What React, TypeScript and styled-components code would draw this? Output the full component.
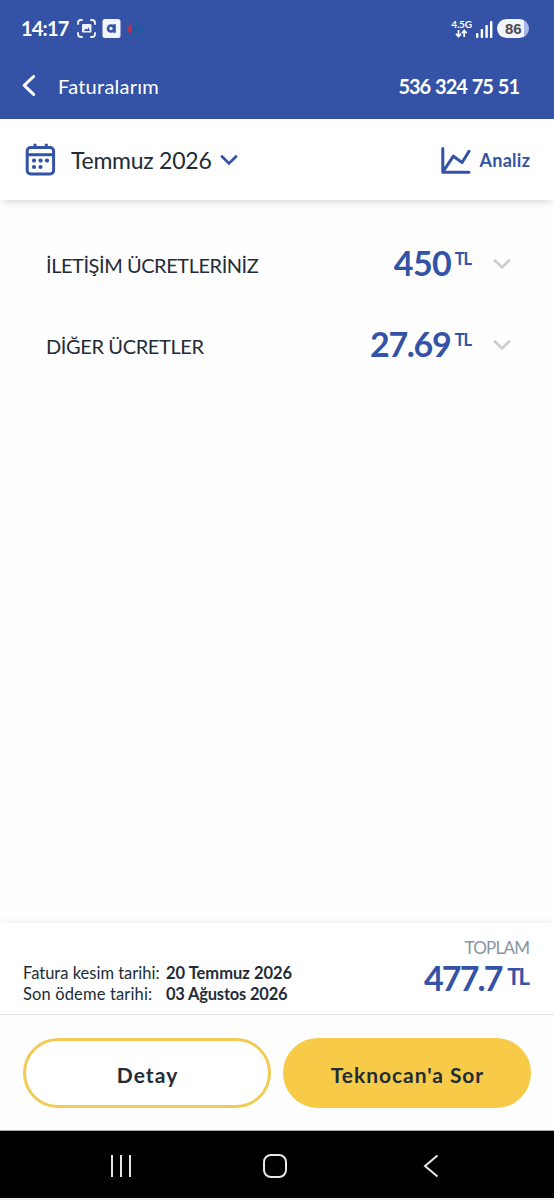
import React from 'react';
import styled, { createGlobalStyle } from 'styled-components';

const blue = '#3453a6';
const ink = '#222c38';

const GlobalStyle = createGlobalStyle`
  * { box-sizing: border-box; }
  body { margin: 0; background: #fff; font-family: Lato, "Liberation Sans", sans-serif; }
  svg { display: block; flex: none; }
`;

const Screen = styled.div`
  width: 554px;
  height: 1200px;
  display: flex;
  flex-direction: column;
  background: #fefefe;
  overflow: hidden;
`;

const Text = styled.span<{ $size: number; $weight?: number; $track?: number; $word?: number; $color?: string }>`
  font-size: ${p => p.$size}px;
  font-weight: ${p => p.$weight ?? 400};
  letter-spacing: ${p => p.$track ?? 0}px;
  word-spacing: ${p => p.$word ?? 0}px;
  margin-left: 0;
  margin-right: ${p => -(p.$track ?? 0)}px;
  color: ${p => p.$color ?? ink};
  line-height: 1.2;
  white-space: pre;
`;

const Header = styled.header`
  height: 119px;
  flex: none;
  background: ${blue};
`;

const StatusBar = styled.div`
  height: 57px;
  padding: 0 25px 0 21px;
  display: flex;
  align-items: center;
  justify-content: space-between;
`;

const StatusGroup = styled.div<{ $gap: number }>`
  display: flex;
  align-items: center;
  gap: ${p => p.$gap}px;
`;

const ClockBox = styled.div`
  width: 50px;
  margin-top: -1px;
`;

const Network = styled.div`
  width: 21px;
  display: flex;
  flex-direction: column;
  align-items: center;
`;

const NetworkLabel = styled.span`
  font: 700 10px/9px Lato, sans-serif;
  color: #fff;
  letter-spacing: -0.2px;
`;

const Battery = styled.div`
  width: 32px;
  height: 19px;
  border-radius: 10px;
  background: linear-gradient(90deg, #f4f4fb 27px, #a9b6e4 27px);
  display: flex;
  align-items: center;
  padding-left: 8px;
  font: 700 15px/19px "Liberation Sans", sans-serif;
  color: #4a4a50;
`;

const NavRow = styled.div`
  height: 57px;
  padding: 0 34px 0 22px;
  display: flex;
  align-items: center;
`;

const NavTitle = styled.div`
  flex: 1;
  padding-left: 20px;
`;

const PeriodBar = styled.div`
  height: 81px;
  flex: none;
  padding: 0 24px 0 25px;
  display: flex;
  align-items: center;
  background: #fff;
  box-shadow: 0 4px 7px -2px rgba(0, 0, 0, 0.15);
`;

const Period = styled.button`
  border: 0;
  background: none;
  padding: 0;
  display: flex;
  align-items: center;
  font-family: inherit;
`;

const PeriodLabel = styled.span`
  width: 149px;
  margin-left: 15px;
  padding-top: 2px;
  text-align: left;
`;

const Analysis = styled.div`
  margin-left: auto;
  padding-top: 2px;
  display: flex;
  align-items: center;
  gap: 8px;
`;

const Charges = styled.main`
  flex: 1;
  padding: 23px 43px 0 46px;
`;

const ChargeRow = styled.div`
  height: 81px;
  display: flex;
  align-items: center;
`;

const ChargeName = styled.div`
  flex: 1;
  padding-top: 3px;
`;

const Amount = styled.div<{ $gap: number }>`
  display: flex;
  align-items: flex-start;
  justify-content: flex-end;
  gap: ${p => p.$gap}px;
`;

const Unit = styled.div<{ $top: number }>`
  padding-top: ${p => p.$top}px;
  display: flex;
`;

const ChevronSlot = styled.div`
  margin-left: 21px;
`;

const Summary = styled.section`
  height: 92px;
  flex: none;
  padding: 0 24px 0 23px;
  display: flex;
  justify-content: space-between;
  background: #fff;
  border-bottom: 1px solid #dce2ea;
  box-shadow: 0 -4px 7px -2px rgba(0, 0, 0, 0.06);
`;

const Dates = styled.dl`
  margin: 0;
  padding-top: 41px;
  display: grid;
  grid-template-columns: 143px auto;
  grid-auto-rows: 20.5px;
  align-content: start;
`;

const Total = styled.div`
  padding-top: 15px;
  display: flex;
  flex-direction: column;
  align-items: flex-end;
`;

const Actions = styled.div`
  height: 115px;
  flex: none;
  padding: 23px 23px 0;
  display: grid;
  grid-template-columns: 248px 248px;
  column-gap: 12px;
`;

const PillButton = styled.button<{ $filled?: boolean }>`
  height: 70px;
  padding: 3px 0 0;
  border-radius: 35px;
  border: 3px solid ${p => (p.$filled ? '#f7cb47' : '#f1cb55')};
  background: ${p => (p.$filled ? '#f7cb47' : '#fff')};
  font-family: inherit;
`;

const SystemNav = styled.nav`
  height: 70px;
  flex: none;
  background: #000;
  border-top: 1px solid #aaa;
  border-bottom: 2px solid #ededed;
  display: grid;
  grid-template-columns: 197px 112px 200px;
  padding: 3px 0 0 22px;
  align-items: center;
  justify-items: center;
`;

const Chevron = ({ color }: { color: string }) => (
  <svg width="18" height="12" viewBox="0 0 18 12" fill="none" stroke={color} strokeWidth="2.8">
    <path d="M1.2 1.8 L9 9.4 L16.8 1.8" />
  </svg>
);

const charges = [
  { name: 'İLETİŞİM ÜCRETLERİNİZ', amount: '450', track: -0.6, nameTrack: -0.45 },
  { name: 'DİĞER ÜCRETLER', amount: '27.69', track: -1.3, nameTrack: -0.38 },
];

export default function App() {
  return (
    <Screen>
      <GlobalStyle />
      <Header>
        <StatusBar>
          <StatusGroup $gap={6}>
            <ClockBox><Text $size={20} $weight={700} $track={-0.8} $color="#fff">14:17</Text></ClockBox>
            <svg width="19" height="19" viewBox="0 0 19 19" fill="none" stroke="#eef1fa" strokeWidth="1.9" strokeLinecap="round">
              <path d="M1 5V4Q1 1 4 1H5M14 1h1q3 0 3 3v1M18 14v1q0 3-3 3h-1M5 18H4q-3 0-3-3v-1" />
              <rect x="5" y="5" width="9.4" height="8.6" rx="1.2" fill="#eef1fa" stroke="none" />
              <path d="M6.8 12l2-2.4 1.4 1.2 1.3-2.6 1.4 3.8z" fill={blue} stroke="none" />
            </svg>
            <svg width="19" height="19" viewBox="0 0 19 19">
              <rect x=".5" y="0" width="18" height="19" rx="2.5" fill="#f3f5fc" />
              <circle cx="9" cy="9.5" r="3" fill="none" stroke={blue} strokeWidth="2.6" />
              <path d="M12.5 5.2v8.6" stroke={blue} strokeWidth="2.6" />
            </svg>
            <svg width="20" height="16" viewBox="2 0 20 16">
              <path d="M1.500 8 L6 3 V13 Z" fill="#b8324f" />
              <path d="M8 5l3-3h3l-1 4h2V3.500l4.500 4.500-4.500 4.500V10h-2l1 4h-3l-3-3z" fill="#24599f" />
            </svg>
          </StatusGroup>
          <StatusGroup $gap={4}>
            <Network>
              <NetworkLabel>4.5G</NetworkLabel>
              <svg width="13" height="9" viewBox="0 0 13 9" fill="none" stroke="#fff" strokeWidth="1.7">
                <path d="M3.5 1v6M1 4.8l2.5 2.7L6 4.8M9.2 8V2M6.8 4.2l2.4-2.7 2.5 2.7" />
              </svg>
            </Network>
            <svg width="17" height="18" viewBox="0 0 17 18" fill="#fff">
              <rect x="0" y="13" width="2.4" height="5" rx=".8" />
              <rect x="4.7" y="9" width="2.4" height="9" rx=".8" />
              <rect x="9.4" y="5" width="2.4" height="13" rx=".8" />
              <rect x="14" y="1" width="2.4" height="17" rx=".8" />
            </svg>
            <Battery>86</Battery>
          </StatusGroup>
        </StatusBar>
        <NavRow>
          <svg width="16" height="22" viewBox="0 0 16 22" fill="none" stroke="#fff" strokeWidth="3" strokeLinecap="round" strokeLinejoin="round">
            <path d="M11.6 1.5 L2.2 10.3 L11.6 19.4" />
          </svg>
          <NavTitle><Text $size={20} $track={0.25} $color="#fff">Faturalarım</Text></NavTitle>
          <Text $size={20} $weight={700} $track={-1} $word={1} $color="#fff">536 324 75 51</Text>
        </NavRow>
      </Header>

      <PeriodBar>
        <Period>
          <svg width="31" height="34" viewBox="0 0 31 34" fill="none" stroke={blue} strokeWidth="3">
            <rect x="2.2" y="4.5" width="26.4" height="26.5" rx="3.5" />
            <path d="M2 11.8h27M10 .8V6M21.3.8V6" />
            <g fill={blue} stroke="none">
              <circle cx="9" cy="17.6" r="2.1" /><circle cx="15.5" cy="17.6" r="2.1" /><circle cx="22" cy="17.6" r="2.1" />
              <circle cx="9" cy="24" r="2.1" /><circle cx="15.5" cy="24" r="2.1" />
            </g>
          </svg>
          <PeriodLabel><Text $size={23} $track={-0.25}>Temmuz 2026</Text></PeriodLabel>
          <Chevron color={blue} />
        </Period>
        <Analysis>
          <svg width="30" height="27" viewBox="0 0 30 27" fill="none" stroke={blue} strokeWidth="3" strokeLinecap="round" strokeLinejoin="round">
            <path d="M1.8 1.5V25.2H28M2.5 24L12.4 9.2l8.7 6.3L28 4.3" />
          </svg>
          <Text $size={18} $weight={700} $track={0.3} $color={blue}>Analiz</Text>
        </Analysis>
      </PeriodBar>

      <Charges>
        {charges.map(c => (
          <ChargeRow key={c.name}>
            <ChargeName><Text $size={20} $track={c.nameTrack}>{c.name}</Text></ChargeName>
            <Amount $gap={3}>
              <Text $size={34} $weight={700} $color={blue} $track={c.track}>{c.amount}</Text>
              <Unit $top={7}><Text $size={16.5} $weight={700} $track={-1.2} $color={blue}>TL</Text></Unit>
            </Amount>
            <ChevronSlot><Chevron color="#cbcdd0" /></ChevronSlot>
          </ChargeRow>
        ))}
      </Charges>

      <Summary>
        <Dates>
          <Text as="dt" $size={16.5}>Fatura kesim tarihi:</Text>
          <Text as="dd" $size={16.5} $weight={700}>20 Temmuz 2026</Text>
          <Text as="dt" $size={16.5} $track={0.14}>Son ödeme tarihi:</Text>
          <Text as="dd" $size={16.5} $weight={700} $track={-0.2}>03 Ağustos 2026</Text>
        </Dates>
        <Total>
          <Text $size={17} $track={-0.75} $color="#8794a3">TOPLAM</Text>
          <Amount $gap={4}>
            <Text $size={34} $weight={700} $track={-1.9} $color={blue}>477.7</Text>
            <Unit $top={6}><Text $size={22} $weight={700} $track={-2} $color={blue}>TL</Text></Unit>
          </Amount>
        </Total>
      </Summary>

      <Actions>
        <PillButton><Text $size={21} $weight={700} $track={1.1}>Detay</Text></PillButton>
        <PillButton $filled><Text $size={21} $weight={700} $track={0.95}>Teknocan'a Sor</Text></PillButton>
      </Actions>

      <SystemNav>
        <svg width="24" height="24" viewBox="0 0 24 24" stroke="#e4e4e4" strokeWidth="2"><path d="M3 1v22M12 1v22M21 1v22" /></svg>
        <svg width="24" height="24" viewBox="0 0 24 24" fill="none" stroke="#e8e8e8" strokeWidth="2"><rect x="1" y="1" width="22" height="22" rx="7" /></svg>
        <svg width="16" height="24" viewBox="0 0 16 24" fill="none" stroke="#e8e8e8" strokeWidth="2"><path d="M14.5 1.5L2 12l12.5 10.5" /></svg>
      </SystemNav>
    </Screen>
  );
}
